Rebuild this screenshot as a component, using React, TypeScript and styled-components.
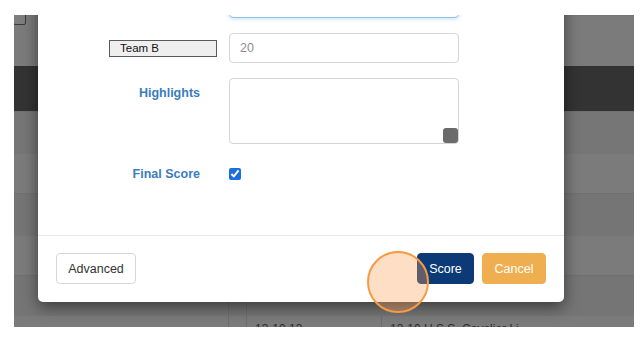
import styled, { createGlobalStyle } from "styled-components";

const GlobalStyle = createGlobalStyle`
  body {
    margin: 0;
    background: #ffffff;
    font-family: "Liberation Sans", Arial, sans-serif;
  }
  * {
    box-sizing: border-box;
  }
`;

const Page = styled.div`
  padding: 15px 10px 16px 14px;
`;

const Screen = styled.div`
  position: relative;
  width: 620px;
  height: 312px;
  overflow: hidden;
  background: #7b7b7b;
`;

const Table = styled.div`
  display: flex;
  flex-direction: column;
`;

const Row = styled.div<{ $h: number; $bg: string }>`
  display: flex;
  height: ${(p) => p.$h}px;
  background: ${(p) => p.$bg};
  border-top: 1px solid rgba(0, 0, 0, 0.04);
`;

const Cell = styled.div<{ $w?: number }>`
  flex: ${(p) => (p.$w ? `0 0 ${p.$w}px` : "1 1 auto")};
  border-left: 1px solid #6c6c6c;
  padding: 6px 0 0 8px;
  font-size: 12px;
  line-height: 14px;
  color: #2e2e2e;
  white-space: nowrap;
  overflow: hidden;
  &:first-child {
    border-left: none;
  }
`;

const TinyCheck = styled.div`
  width: 13px;
  height: 12px;
  margin: -3px 0 0 -1px;
  border: 1px solid #3a3a3a;
  border-radius: 2px;
  background: #7e7e7e;
`;

const Modal = styled.div`
  position: absolute;
  left: 24px;
  top: -42px;
  width: 526px;
  background: #ffffff;
  border-radius: 5px;
  box-shadow: 0 5px 15px rgba(0, 0, 0, 0.5);
`;

const Body = styled.div`
  display: grid;
  grid-template-columns: 179px 230px;
  column-gap: 12px;
  row-gap: 15px;
  padding: 15px 0 46px;
`;

const Label = styled.div<{ $top?: boolean }>`
  display: flex;
  justify-content: flex-end;
  align-items: ${(p) => (p.$top ? "flex-start" : "center")};
  padding-right: 17px;
  padding-top: ${(p) => (p.$top ? "8px" : "0")};
  font-size: 12.5px;
  font-weight: bold;
  color: #3b7cbf;
`;

const TeamCell = styled.div`
  display: flex;
  justify-content: flex-end;
  align-items: center;
`;

const TeamBox = styled.div`
  width: 108px;
  height: 17px;
  border: 1px solid #5a5a5a;
  background: #efefef;
  padding-left: 10px;
  font-size: 11.5px;
  line-height: 15px;
  color: #111;
`;

const Input = styled.input<{ $focus?: boolean }>`
  width: 230px;
  height: 30px;
  padding: 0 10px;
  border: 1px solid ${(p) => (p.$focus ? "#8fc2ec" : "#d4d4d4")};
  border-radius: 4px;
  box-shadow: ${(p) => (p.$focus ? "0 0 5px rgba(102,175,233,0.55)" : "none")};
  font-family: inherit;
  font-size: 12.5px;
  color: #8c8c8c;
  outline: none;
`;

const AreaWrap = styled.div`
  position: relative;
  width: 230px;
  height: 66px;
`;

const Area = styled.textarea`
  width: 100%;
  height: 100%;
  border: 1px solid #d4d4d4;
  border-radius: 4px;
  resize: none;
  outline: none;
  font-family: inherit;
`;

const Grip = styled.div`
  position: absolute;
  right: 1px;
  bottom: 1px;
  width: 15px;
  height: 15px;
  border-radius: 3px;
  background: #6b6b6b;
`;

const CheckCell = styled.div`
  display: flex;
  align-items: center;
  height: 30px;
`;

const Check = styled.input`
  width: 12px;
  height: 12px;
  margin: 0;
  accent-color: #1a6fdc;
`;

const Footer = styled.div`
  display: flex;
  align-items: center;
  gap: 8px;
  border-top: 1px solid #e8e8e8;
  padding: 17px 18px 18px 18px;
`;

const Button = styled.button<{ $kind: "plain" | "primary" | "warn"; $w: number }>`
  width: ${(p) => p.$w}px;
  height: 31px;
  border-radius: 4px;
  font-family: inherit;
  font-size: 12.5px;
  padding: 0;
  border: 1px solid
    ${(p) => (p.$kind === "plain" ? "#d6d6d6" : p.$kind === "primary" ? "#0b3a76" : "#efae50")};
  background: ${(p) => (p.$kind === "plain" ? "#ffffff" : p.$kind === "primary" ? "#0b3a76" : "#efae50")};
  color: ${(p) => (p.$kind === "plain" ? "#333333" : "#ffffff")};
`;

const Spacer = styled.div`
  flex: 1;
`;

const Cursor = styled.div`
  position: absolute;
  left: 353px;
  top: 236px;
  width: 62px;
  height: 62px;
  border-radius: 50%;
  border: 2px solid #f59a45;
  background: rgba(251, 160, 90, 0.35);
`;

const rows = [
  { h: 51, bg: "#7b7b7b" },
  { h: 45, bg: "#333333" },
  { h: 42, bg: "#767676" },
  { h: 40, bg: "#7b7b7b" },
  { h: 42, bg: "#757575" },
  { h: 40, bg: "#7b7b7b" },
];

function App() {
  return (
    <>
      <GlobalStyle />
      <Page>
        <Screen>
          <Table>
            {rows.map((r, i) => (
              <Row key={i} $h={r.h} $bg={r.bg}>
                {i === 0 ? <TinyCheck /> : null}
              </Row>
            ))}
            <Row $h={40} $bg="#757575">
              <Cell $w={214} />
              <Cell $w={18} />
              <Cell />
            </Row>
            <Row $h={12} $bg="#7b7b7b">
              <Cell $w={214} />
              <Cell $w={18} />
              <Cell $w={135}>13-10 13</Cell>
              <Cell>13-10 U.S.S. Cavalier Li</Cell>
            </Row>
          </Table>

          <Modal>
            <Body>
              <div />
              <Input $focus readOnly />
              <TeamCell>
                <TeamBox>Team B</TeamBox>
              </TeamCell>
              <Input defaultValue="20" />
              <Label $top>Highlights</Label>
              <AreaWrap>
                <Area />
                <Grip />
              </AreaWrap>
              <Label>Final Score</Label>
              <CheckCell>
                <Check type="checkbox" defaultChecked />
              </CheckCell>
            </Body>
            <Footer>
              <Button $kind="plain" $w={80}>Advanced</Button>
              <Spacer />
              <Button $kind="primary" $w={57}>Score</Button>
              <Button $kind="warn" $w={64}>Cancel</Button>
            </Footer>
          </Modal>

          <Cursor />
        </Screen>
      </Page>
    </>
  );
}

export default App;
